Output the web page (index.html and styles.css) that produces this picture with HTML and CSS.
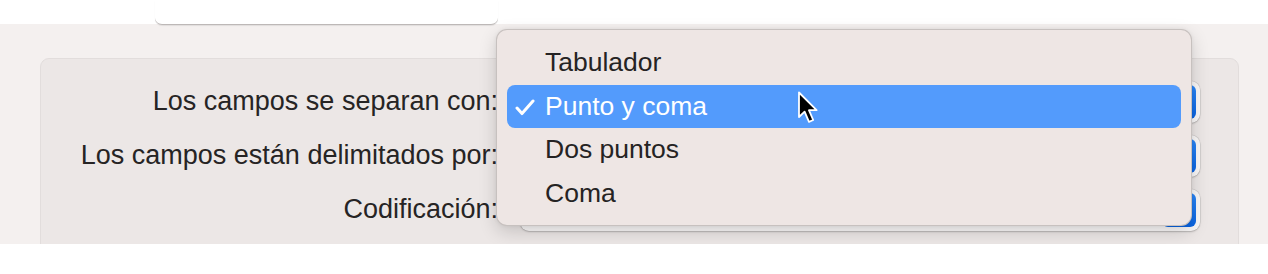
FILE: index.html
```html
<!DOCTYPE html>
<html lang="es">
<head>
<meta charset="utf-8">
<title>Importar</title>
<link rel="stylesheet" href="styles.css">
</head>
<body>
<div class="window">
  <div class="top-row">
    <div class="field"></div>
  </div>
  <div class="group">
    <div class="row">
      <div class="label">Los campos se separan con:</div>
      <div class="popup"><div class="popup-arrow"></div></div>
    </div>
    <div class="row">
      <div class="label">Los campos están delimitados por:</div>
      <div class="popup"><div class="popup-arrow"></div></div>
    </div>
    <div class="row">
      <div class="label">Codificación:</div>
      <div class="popup"><div class="popup-arrow"></div></div>
    </div>
  </div>

  <div class="menu">
    <div class="item">Tabulador</div>
    <div class="item selected">
      <svg class="check" width="20" height="17" viewBox="0 0 20 17"><path d="M2 9 L7 14.6 L18 2" fill="none" stroke="#fff" stroke-width="3" stroke-linecap="round" stroke-linejoin="round"/></svg>
      Punto y coma
    </div>
    <div class="item">Dos puntos</div>
    <div class="item">Coma</div>
  </div>

  <svg class="cursor" width="24" height="35" viewBox="0 0 24 35">
    <path d="M2 1.5 L2 26 L7.6 20.6 L12 30.8 L16.2 29 L11.9 19.2 L19.6 19.2 Z" fill="#000" stroke="#fff" stroke-width="1.8" stroke-linejoin="round"/>
  </svg>
</div>
</body>
</html>
```

FILE: styles.css
```css
html, body {
  margin: 0;
  padding: 0;
  background: #ffffff;
}

body {
  font-family: "Liberation Sans", Arial, sans-serif;
  color: #262424;
}

.window {
  position: relative;
  width: 1268px;
  height: 244px;
  overflow: hidden;
  background: linear-gradient(#ffffff 0, #ffffff 24px, #f4f0ef 24px);
}

.top-row {
  display: flex;
  padding-left: 155px;
}

.field {
  width: 343px;
  height: 24px;
  background: #ffffff;
  border-bottom: 1px solid #bdb8b7;
  border-radius: 0 0 7px 7px;
  box-shadow: 0 1px 1px rgba(0, 0, 0, 0.08);
}

.group {
  margin-top: 33px;
  margin-left: 40px;
  width: 1199px;
  height: 200px;
  background: #ece7e6;
  border: 1px solid #e2dddc;
  border-radius: 9px;
  padding-top: 22px;
  box-sizing: border-box;
  display: flex;
  flex-direction: column;
  gap: 12px;
}

.row {
  display: flex;
  align-items: center;
  height: 42px;
}

.label {
  width: 457px;
  text-align: right;
  font-size: 27px;
  line-height: 32px;
  margin-right: 22px;
  margin-top: -2px;
  white-space: nowrap;
}

.popup {
  width: 680px;
  height: 42px;
  box-sizing: border-box;
  padding: 4px;
  background: #faf8f8;
  border-radius: 9px;
  box-shadow: 0 0 0 0.5px rgba(0, 0, 0, 0.12), 0 1px 2px rgba(0, 0, 0, 0.18);
  display: flex;
  justify-content: flex-end;
}

.popup-arrow {
  width: 34px;
  border-radius: 6px;
  background: linear-gradient(#2b87f8, #0a64e2);
}

.menu {
  position: absolute;
  left: 496px;
  top: 29px;
  width: 696px;
  height: 197px;
  box-sizing: border-box;
  padding: 11px 10px 10px;
  background: #eee6e4;
  border: 1px solid rgba(0, 0, 0, 0.16);
  border-radius: 11px;
  box-shadow: 0 6px 18px rgba(0, 0, 0, 0.16), 0 0 4px rgba(0, 0, 0, 0.06);
  display: flex;
  flex-direction: column;
}

.item {
  position: relative;
  height: 44px;
  display: flex;
  align-items: center;
  padding-left: 38px;
  font-size: 26.5px;
  color: #252323;
  border-radius: 8px;
  white-space: nowrap;
}

.item.selected {
  background: #539bfc;
  color: #ffffff;
}

.check {
  position: absolute;
  left: 8px;
  top: 14px;
}

.cursor {
  position: absolute;
  left: 797px;
  top: 91px;
}
```
